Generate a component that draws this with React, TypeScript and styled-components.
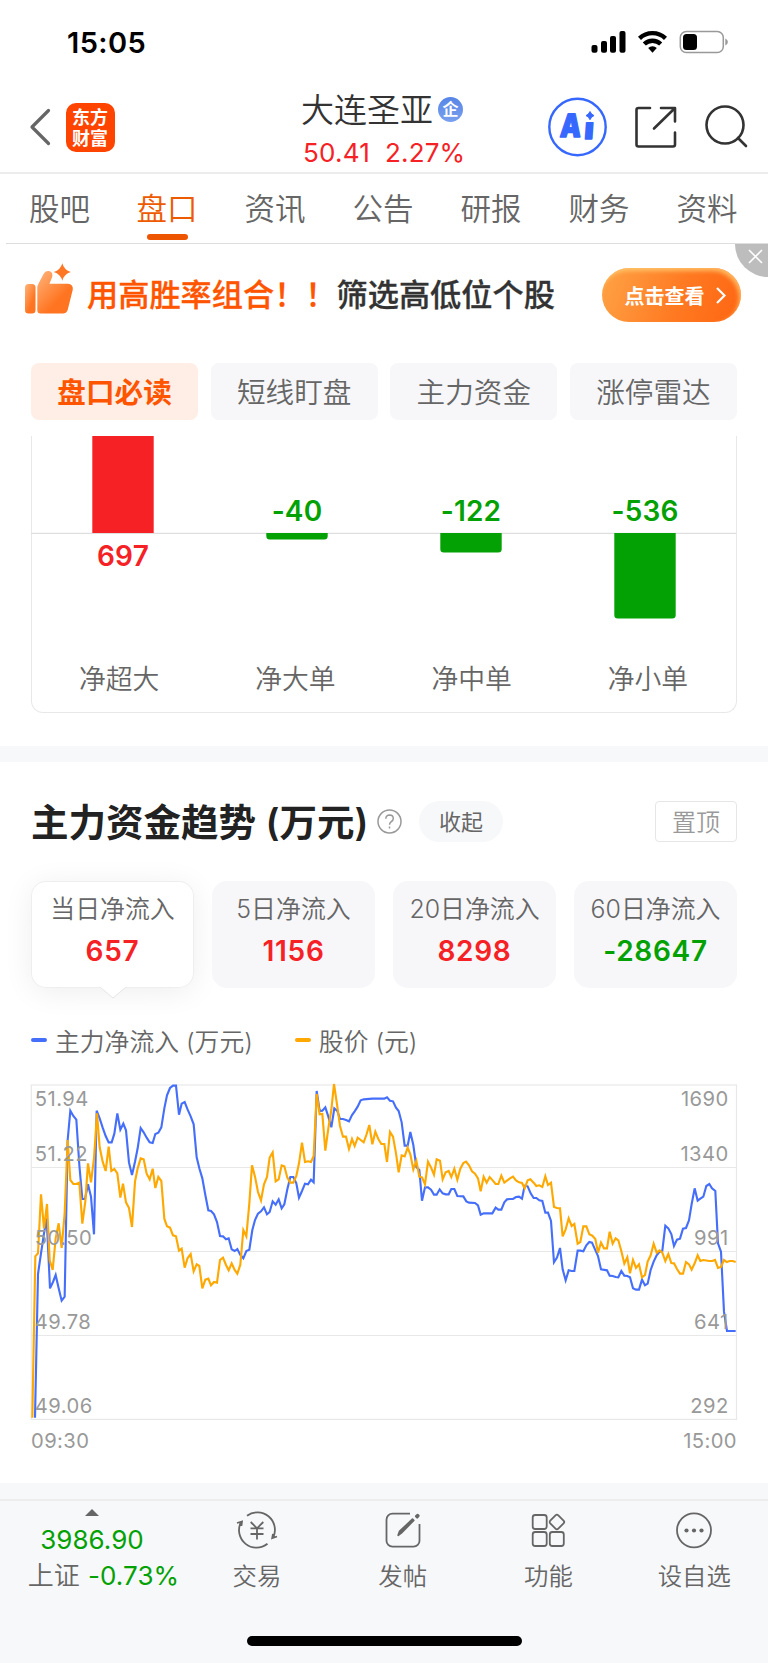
import React from 'react';
import styled, { createGlobalStyle } from 'styled-components';

const RED = '#f62124';
const GREEN = '#03a104';
const ORANGE = '#ff5500';
const GREY = '#666666';

const Global = createGlobalStyle`
  * { box-sizing: border-box; }
  body { margin: 0; background: #fff; }
`;

const Screen = styled.div`
  width: 768px;
  height: 1663px;
  display: flex;
  flex-direction: column;
  overflow: hidden;
  background: #fff;
  color: ${GREY};
  font-family: Inter, 'Noto Sans CJK SC', sans-serif;
  font-weight: 400;
  white-space: nowrap;
  svg { display: block; flex: none; }
`;

const StatusBar = styled.div`
  height: 84px;
  padding: 0 39px 0 67px;
  display: flex;
  justify-content: space-between;
  align-items: center;
`;

const Clock = styled.span`
  font-size: 29px;
  font-weight: 600;
  letter-spacing: 0.4px;
  color: #000;
`;

const Header = styled.header`
  height: 90px;
  border-bottom: 2px solid #ececec;
  display: grid;
  grid-template-columns: 270px 1fr 270px;
`;

const HeaderLeft = styled.div`
  display: flex;
  align-items: center;
  gap: 15px;
  padding: 0 0 6px 29px;
`;

const BrandLogo = styled.div`
  width: 49px;
  height: 49px;
  padding: 3px 6px 0;
  border-radius: 10px;
  background: #ff4400;
  color: #fff;
  font: 700 18px/21px 'Noto Sans CJK SC', sans-serif;
  white-space: normal;
  word-break: break-all;
`;

const HeaderTitle = styled.div`
  padding: 6px 0 0 31px;
  display: flex;
  flex-direction: column;
`;

const StockName = styled.div`
  display: flex;
  align-items: center;
  gap: 5px;
  height: 40px;
  color: #333;
  font-size: 33px;
  line-height: 38px;
  padding-bottom: 1px;
  font-weight: 350;
`;

const NameBadge = styled.span`
  width: 25px;
  height: 25px;
  border-radius: 50%;
  background: linear-gradient(#5685e6, #7ba0ee);
  color: #fff;
  font-size: 16px;
  font-weight: 700;
  line-height: 24px;
  text-align: center;
`;

const Quote = styled.div`
  display: flex;
  gap: 15px;
  padding-left: 2px;
  height: 46px;
  line-height: 46px;
  font-size: 26px;
  letter-spacing: 0.2px;
  color: ${RED};
`;

const HeaderTools = styled.div`
  display: flex;
  align-items: center;
  justify-content: flex-end;
  padding: 0 20px 6px 0;
`;

const Tabs = styled.nav`
  height: 70px;
  margin-left: 6px;
  border-bottom: 1px solid #dedede;
  display: grid;
  grid-template-columns: 107px repeat(6, 108px);
`;

const Tab = styled.div<{ $active?: boolean }>`
  display: flex;
  flex-direction: column;
  align-items: center;
  justify-content: space-between;
  font-size: 30.5px;
  font-weight: 350;
  line-height: 70px;
  height: 66px;
  color: ${p => (p.$active ? '#ee5a00' : GREY)};
  span { height: 58px; }
  &::after {
    content: '';
    width: 41px;
    height: 6px;
    border-radius: 3px;
    background: ${p => (p.$active ? '#ee5500' : 'transparent')};
  }
`;

const Promo = styled.section`
  position: relative;
  height: 119px;
  display: flex;
  align-items: flex-start;
  padding: 19px 27px 0 24px;
`;

const PromoText = styled.div`
  width: 528px;
  padding-left: 13px;
  font: 500 31.2px/60px 'Noto Sans CJK SC', sans-serif;
  -webkit-text-stroke: 0.3px;
  color: #333;
  em { font-style: normal; color: ${ORANGE}; }
`;

const PromoButton = styled.div`
  width: 139px;
  height: 54px;
  margin-top: 5px;
  padding-left: 7px;
  border-radius: 27px;
  background: linear-gradient(110deg, #ff9c40 10%, #ff7a22 55%, #ff6512);
  box-shadow: inset -2px 3px 4px rgba(255, 210, 120, 0.75);
  color: #fff;
  font-size: 20px;
  font-weight: 700;
  display: flex;
  align-items: center;
  justify-content: center;
  gap: 11px;
`;

const CloseCorner = styled.div`
  position: absolute;
  right: 0;
  top: 0;
  width: 33px;
  height: 33px;
  border-bottom-left-radius: 33px;
  background: #bdbdbd;
  padding: 5px 0 0 13px;
`;

const Pills = styled.div`
  display: grid;
  grid-template-columns: repeat(4, 1fr);
  gap: 12.5px;
  padding: 0 31px;
  height: 73px;
`;

const Pill = styled.div<{ $active?: boolean }>`
  height: 57px;
  border-radius: 8px;
  background: ${p => (p.$active ? '#ffeee6' : '#f7f7fa')};
  color: ${p => (p.$active ? ORANGE : GREY)};
  font-size: 28.6px;
  font-weight: ${p => (p.$active ? 700 : 350)};
  line-height: 60px;
  text-align: center;
`;

const BarPanel = styled.section`
  margin: 0 31px;
  height: 277px;
  border: 1.5px solid #e8e8e8;
  border-top: 0;
  border-radius: 0 0 12px 12px;
`;

const BarLabels = styled.div`
  display: grid;
  grid-template-columns: repeat(4, 1fr);
  text-align: center;
  font-size: 26.8px;
  font-weight: 350;
  line-height: 40px;
  margin: 1px 0 0 -1px;
`;

const Band = styled.div<{ $top?: number }>`
  height: 16px;
  margin-top: ${p => p.$top ?? 0}px;
  background: #f7f8fa;
  flex: none;
`;

const SectionHead = styled.div`
  display: flex;
  align-items: center;
  height: 41px;
  margin: 39px 31px 0;
`;

const SectionTitle = styled.h2`
  margin: 0;
  width: 346px;
  height: 41px;
  font-size: 37.5px;
  font-weight: 600;
  line-height: 43px;
  color: #222;
`;

const FoldButton = styled.div`
  width: 84px;
  height: 41px;
  margin-left: 17px;
  border-radius: 21px;
  background: #f7f8fa;
  font-size: 22px;
  line-height: 42px;
  text-align: center;
`;

const PinButton = styled.div`
  width: 82px;
  height: 41px;
  margin-left: auto;
  border: 1.5px solid #e6e6e6;
  border-radius: 4px;
  font-size: 24px;
  font-weight: 350;
  line-height: 42px;
  text-align: center;
  color: #999;
`;

const Cards = styled.div`
  display: grid;
  grid-template-columns: repeat(4, 163px);
  justify-content: space-between;
  margin: 39px 31px 0;
`;

const Card = styled.div<{ $active?: boolean }>`
  position: relative;
  height: 107px;
  padding-top: 9px;
  border-radius: 15px;
  background: ${p => (p.$active ? '#fff' : '#f7f7fa')};
  box-shadow: ${p => (p.$active ? 'inset 0 0 0 1px #eeeeee, 0 4px 30px rgba(0,0,0,0.07)' : 'none')};
  text-align: center;
  font-size: 24.9px;
  font-weight: 350;
  line-height: 38px;
`;

const CardTail = styled.svg`
  position: absolute;
  left: 69px;
  top: 105px;
`;

const CardValue = styled.div<{ $down?: boolean }>`
  font-size: 28px;
  font-weight: 600;
  line-height: 47px;
  letter-spacing: 0.7px;
  color: ${p => (p.$down ? GREEN : RED)};
`;

const Legend = styled.div`
  display: flex;
  gap: 42px;
  height: 40px;
  margin: 32px 31px 0;
`;

const LegendItem = styled.div<{ $color: string }>`
  display: flex;
  align-items: center;
  gap: 8px;
  font-size: 24.8px;
  font-weight: 350;
  &::before {
    content: '';
    width: 16px;
    height: 4px;
    border-radius: 2px;
    background: ${p => p.$color};
  }
`;

const TrendChart = styled.svg`
  margin: 22px 0 0 28px;
`;

const TimeAxis = styled.div`
  display: flex;
  justify-content: space-between;
  height: 40px;
  margin: -1px 31px 0;
  font-size: 20.2px;
  letter-spacing: 0.4px;
  line-height: 40px;
  color: #999;
`;

const BottomBar = styled.footer`
  flex: 1;
  border-top: 2px solid #ededed;
  background: #f7f8fa;
  display: flex;
  flex-direction: column;
  align-items: center;
`;

const NavRow = styled.div`
  display: grid;
  grid-template-columns: 184px repeat(4, 145.8px);
  width: 768px;
  height: 135px;
`;

const IndexCell = styled.div`
  display: flex;
  flex-direction: column;
  align-items: center;
  padding-top: 8px;
  font-size: 26px;
  color: ${GREEN};
`;

const IndexValue = styled.div`
  height: 36px;
  line-height: 36px;
  margin-top: 6px;
`;

const IndexChange = styled.div`
  height: 36px;
  line-height: 36px;
  padding-left: 23px;
  letter-spacing: 0.1px;
  span { color: ${GREY}; font-weight: 350; margin-right: 8px; }
`;

const NavItem = styled.div`
  display: flex;
  flex-direction: column;
  align-items: center;
  padding-top: 9px;
  font-size: 24.4px;
  font-weight: 350;
  line-height: 36px;
  gap: 8px;
`;

const HomeIndicator = styled.div`
  width: 275px;
  height: 10px;
  border-radius: 5px;
  background: #000;
`;

/* Series are held in thirds of a pixel, measured from the left edge of the page. */
const flowLine =
  '105,1043 114,612 123,550 132,490 140,445 150,655 159,636 167,615 176,655 185,692 194,680 203,210 211,122 220,138 229,149 238,285 247,387 255,387 264,343 273,380 282,493 290,122 299,145 308,173 317,198 326,217 335,217 343,191 352,130 361,179 370,161 378,181 387,278 396,315 405,275 413,235 422,174 431,187 440,203 449,217 458,219 466,192 475,188 484,172 493,115 501,76 510,54 519,47 528,47 537,134 545,101 554,96 563,119 572,139 581,163 590,262 598,295 607,325 616,375 625,421 633,423 642,433 651,456 660,498 669,499 678,508 686,505 695,538 704,543 712,537 721,555 730,565 739,543 748,539 757,480 765,450 774,431 ' +
  '783,424 792,412 801,433 809,426 818,394 827,404 836,388 845,415 853,403 862,358 871,321 880,321 889,340 897,383 906,363 915,341 924,343 933,329 941,337 950,63 959,123 967,122 976,112 985,140 994,172 1003,115 1012,123 1020,147 1029,147 1038,150 1047,154 1056,135 1064,124 1073,110 1082,91 1091,88 1117,86 1153,86 1161,82 1170,92 1179,94 1188,113 1196,123 1205,157 1214,227 1223,227 1231,186 1240,225 1249,291 1258,300 1266,392 1275,352 1284,352 1293,359 1302,374 1310,374 1319,358 1328,370 1337,373 1346,373 1354,357 1363,357 1372,378 1390,379 1399,394 1407,398 1425,399 1434,406 1442,434 1451,430 1477,430 1487,413 1495,419 1504,419 1513,397 1521,388 1530,387 ' +
  '1539,387 1548,381 1557,380 1566,386 1574,347 1583,349 1592,370 1601,384 1609,384 1618,391 1627,393 1636,428 1644,428 1653,453 1662,577 1671,563 1680,534 1688,598 1697,631 1706,601 1715,603 1723,603 1733,542 1741,542 1750,544 1759,526 1768,516 1776,518 1785,538 1794,558 1803,598 1821,601 1829,617 1838,618 1847,621 1855,622 1864,603 1873,617 1882,618 1890,622 1899,655 1908,659 1917,659 1926,629 1935,646 1943,641 1952,600 1961,575 1970,556 1979,545 1987,542 1996,467 2005,475 2014,492 2022,528 2031,509 2040,506 2049,476 2058,474 2067,451 2075,402 2084,355 2093,392 2101,386 2110,380 2119,348 2128,342 2136,355 2146,363 2154,520 2163,545 2172,725 2181,783 2207,783';

const priceLine =
  '97,1043 106,559 114,550 123,373 132,475 141,402 149,570 158,600 167,505 176,460 185,534 194,430 203,210 211,330 220,342 229,342 238,338 247,461 256,394 264,280 273,337 282,265 291,130 299,232 308,275 317,303 326,230 334,303 343,297 352,310 361,383 369,341 378,397 387,414 396,471 405,335 413,295 422,265 431,268 440,311 449,328 458,296 466,354 475,321 484,333 493,446 501,469 510,473 519,496 528,499 537,542 545,536 554,593 563,564 572,552 581,604 590,583 598,588 607,655 616,629 625,626 633,646 642,636 651,638 660,570 669,563 678,585 686,601 695,580 704,600 712,611 721,584 730,480 739,499 748,400 756,286 765,320 774,366 ' +
  '783,391 792,343 801,321 809,263 818,247 827,334 836,328 845,286 853,289 862,323 871,338 880,338 889,318 897,280 906,218 915,276 924,274 933,276 941,258 950,72 959,133 967,132 976,242 985,175 994,120 1002,42 1012,110 1020,168 1029,200 1038,200 1047,237 1056,207 1064,228 1073,203 1082,210 1091,217 1099,195 1108,165 1117,223 1126,185 1135,207 1144,222 1153,222 1161,276 1170,186 1179,200 1188,250 1196,307 1205,256 1214,259 1223,233 1231,253 1240,298 1249,272 1258,320 1266,322 1275,343 1284,275 1293,292 1302,314 1310,268 1320,272 1328,328 1337,307 1346,303 1354,321 1363,296 1372,329 1381,296 1390,279 1398,275 1407,286 1416,304 1425,311 1434,325 1442,364 1451,320 1460,338 1469,321 1478,331 1487,342 1495,342 1504,317 1513,338 1521,332 1530,325 ' +
  '1539,320 1548,331 1557,337 1566,339 1574,355 1583,331 1591,328 1601,338 1609,348 1618,346 1627,351 1636,319 1644,345 1653,338 1662,411 1671,414 1680,415 1688,499 1697,478 1706,445 1715,468 1723,462 1733,521 1741,516 1750,469 1759,469 1768,493 1777,497 1786,507 1794,548 1803,518 1812,535 1821,535 1829,485 1838,521 1847,505 1855,511 1864,543 1873,581 1882,562 1890,610 1899,570 1908,594 1917,583 1926,622 1935,615 1943,575 1952,556 1961,521 1970,548 1979,541 1987,548 1996,573 2005,552 2014,579 2022,580 2031,597 2040,611 2049,611 2058,576 2067,583 2075,599 2084,580 2093,556 2101,573 2110,570 2128,573 2137,573 2145,570 2154,594 2163,591 2172,570 2180,576 2189,573 2198,573 2207,576';

const tabs = ['股吧', '盘口', '资讯', '公告', '研报', '财务', '资料'];
const pills = ['盘口必读', '短线盯盘', '主力资金', '涨停雷达'];
const bars = [
  { label: '净超大', value: 697, y: 0, h: 97 },
  { label: '净大单', value: -40, y: 97, h: 6.5 },
  { label: '净中单', value: -122, y: 97, h: 19.5 },
  { label: '净小单', value: -536, y: 97, h: 85.5 },
];
const cards = [
  { label: '当日净流入', value: 657 },
  { label: '5日净流入', value: 1156 },
  { label: '20日净流入', value: 8298 },
  { label: '60日净流入', value: -28647 },
];
const levels = [
  { y: 28.7, left: '51.94', right: '1690' },
  { y: 84, left: '51.22', right: '1340' },
  { y: 168, left: '50.50', right: '991' },
  { y: 252, left: '49.78', right: '641' },
  { y: 336, left: '49.06', right: '292' },
];

const StatusIcons = () => (
  <svg width="138" height="24" viewBox="591 30 138 24">
    <rect x="591.5" y="45" width="6" height="7.7" rx="2" />
    <rect x="601" y="41" width="6" height="11.7" rx="2" />
    <rect x="610" y="36" width="6" height="16.7" rx="2" />
    <rect x="619.5" y="31" width="6" height="21.7" rx="2" />
    <g fill="none" stroke="#000" strokeWidth="4.4">
      <path d="M639.5 38.3a19 19 0 0 1 26 0" />
      <path d="M644.3 44a11.8 11.8 0 0 1 16.4 0" />
    </g>
    <path d="M648.2 48a6.2 6.2 0 0 1 8.6 0l-4.3 4.8z" />
    <rect x="680.3" y="31.5" width="43" height="21" rx="6" fill="none" stroke="#999" strokeWidth="1.5" />
    <rect x="683" y="34" width="14" height="16" rx="3.5" />
    <path d="M725.3 38.5q2.6 1.2 2.6 3.5t-2.6 3.5z" fill="#999" />
  </svg>
);

const ToolIcons = () => (
  <svg width="200" height="60" viewBox="548 97 200 60" fill="none">
    <circle cx="577.5" cy="127" r="28.2" stroke="#3668ff" strokeWidth="2.4" />
    <g fill="#3668ff" stroke="#3668ff" strokeWidth="1.4" strokeLinejoin="round" fontWeight="900" fontFamily="Inter, sans-serif">
      <text transform="translate(559.5 137.3) skewX(-4)" fontSize="32" textLength="21" lengthAdjust="spacingAndGlyphs">A</text>
      <text transform="translate(583.8 139) skewX(-4)" fontSize="30" textLength="9.5" lengthAdjust="spacingAndGlyphs">ı</text>
      <path d="M590 111.500q1.200 3 4 4.100-2.800 1.100-4 4.100-1.200-3-4-4.100 2.800-1.100 4-4.100z" strokeWidth="1" />
    </g>
    <g stroke="#333" strokeWidth="2.6" strokeLinecap="round" strokeLinejoin="round">
      <path d="M650 108h-11.5a2 2 0 0 0-2 2v34.5a2 2 0 0 0 2 2h34.5a2 2 0 0 0 2-2V132.5M661 108h14v13.5M674.5 108.5l-20.5 20" />
      <circle cx="725" cy="125" r="18.5" />
      <path d="M738 138l8 8" />
    </g>
  </svg>
);

const ThumbIcon = () => (
  <svg width="50" height="52" viewBox="24 263 50 52">
    <defs>
      <linearGradient id="thumb" x1="0" y1="0" x2="0.6" y2="0.7">
        <stop offset="0" stopColor="#ffb57c" />
        <stop offset="1" stopColor="#ff7420" />
      </linearGradient>
    </defs>
    <rect x="25" y="284" width="10.5" height="29.5" rx="3.5" fill="url(#thumb)" />
    <path d="M37.3 288q0-2.500 1.500-5l4.500-8.500q2-3.700 5.500-3.400 3.700.5 3.600 4.600-.1 1.500-3 8h18.600q5.300.4 4.800 5.800l-5 20q-1 4-5 4H40.500q-3.200 0-3.200-3.500z" fill="url(#thumb)" />
    <path d="M62.3 263.3q1.800 6.800 8.500 8.700-6.700 2-8.500 8.700-1.800-6.700-8.500-8.700 6.700-1.900 8.500-8.700z" fill="#ff7625" />
  </svg>
);

const TradeIcon = () => (
  <svg width="42" height="40" viewBox="-21 -20 42 40" fill="none" stroke={GREY} strokeWidth="1.8">
    <path d="M-10-14.200A17.500 17.500 0 0 1 16.300 7.200M10.500 13.800A17.500 17.500 0 0 1-16.200-7.500M-20-7l5-1.500-.6 4.500M20 6.500l-4.800 1.700.8-4.200" />
    <path d="M-6.300-8L0-1.700 6.300-8M0-1.700V9.500M-6.500-1.700h13M-6.500 4h13" />
  </svg>
);

const PostIcon = () => (
  <svg width="42" height="40" viewBox="-21 -20 42 40" fill="none" stroke={GREY} strokeWidth="1.8">
    <path d="M7-16.300h-17.500a6 6 0 0 0-6 6v21a6 6 0 0 0 6 6h21a6 6 0 0 0 6-6V-6" />
    <path d="M-4.800 5.200l1.300-3.700L9.500-10.800l1.200 1.200L-1.800 3z" fill={GREY} strokeLinejoin="round" />
    <path d="M13-13.800l1.600-1.300 1 1-1.400 1.600z" fill={GREY} strokeWidth="2.2" strokeLinejoin="round" />
  </svg>
);

const GridIcon = () => (
  <svg width="42" height="40" viewBox="-21 -20 42 40" fill="none" stroke={GREY} strokeWidth="1.8">
    <rect x="-15.3" y="-15" width="14" height="14" rx="2.5" />
    <rect x="-15.3" y="2" width="14" height="14" rx="2.5" />
    <rect x="1.8" y="2" width="14" height="14" rx="2.5" />
    <rect x="3.2" y="-13.7" width="11.4" height="11.4" rx="2" transform="rotate(45 8.9 -8)" />
  </svg>
);

const MoreIcon = () => (
  <svg width="42" height="40" viewBox="-21 -20 42 40" fill={GREY}>
    <circle r="17" cy=".3" fill="none" stroke={GREY} strokeWidth="1.8" />
    <circle cx="-7.5" cy=".5" r="2.1" />
    <circle cy=".5" r="2.1" />
    <circle cx="7.5" cy=".5" r="2.1" />
  </svg>
);

const BarPlot = styled.svg`
  margin-left: -1px;
`;

const BarChart = () => (
  <BarPlot width="705" height="222" viewBox="0 0 705 222">
    <line x1="0" x2="705" y1="97.3" y2="97.3" stroke="#dedede" strokeWidth="1.3" />
    {bars.map((b, i) => {
      const cx = 92 + i * 174;
      const up = b.value > 0;
      const color = up ? RED : GREEN;
      const r = up ? 0 : 3.5;
      return (
        <g key={b.label} fill={color}>
          <path d={`M${cx - 30.7} ${b.y}h61.4v${b.h - r}q0 ${r}-${r} ${r}h${2 * r - 61.4}q-${r} 0-${r}-${r}z`} />
          <text x={cx} y={up ? 130 : 85} fontSize="28" fontWeight="600" letterSpacing=".15" textAnchor="middle">
            {b.value}
          </text>
        </g>
      );
    })}
  </BarPlot>
);

const Trend = () => (
  <TrendChart width="712" height="340" viewBox="28 1082 712 340">
    <g fill="none" stroke="#e8e8e8" strokeWidth="1.2">
      <rect x="31.3" y="1085" width="705.2" height="334.4" />
      <path d="M31 1167.500h705M31 1251.500h705M31 1335.500h705" />
    </g>
    <g transform="translate(0 1070) scale(.33333)" fill="none" strokeWidth="6.4" strokeLinejoin="miter">
      <polyline points={flowLine} stroke="#456ffa" />
      <polyline points={priceLine} stroke="#ffa800" />
    </g>
    <g fill="#999" fontSize="20.2" letterSpacing=".45">
      {levels.map(l => (
        <g key={l.left} transform={`translate(0 ${1077 + l.y})`}>
          <text x="34.8">{l.left}</text>
          <text x="728.7" textAnchor="end">{l.right}</text>
        </g>
      ))}
    </g>
  </TrendChart>
);

export default function App() {
  return (
    <Screen>
      <Global />
      <StatusBar>
        <Clock>15:05</Clock>
        <StatusIcons />
      </StatusBar>
      <Header>
        <HeaderLeft>
          <svg width="22" height="38" viewBox="0 0 22 38" fill="none" stroke={GREY} strokeWidth="3.2" strokeLinecap="round" strokeLinejoin="round">
            <path d="M19.5 2.5L3 19l16.5 16.5" />
          </svg>
          <BrandLogo>东方财富</BrandLogo>
        </HeaderLeft>
        <HeaderTitle>
          <StockName>大连圣亚<NameBadge>企</NameBadge></StockName>
          <Quote><span>50.41</span><span>2.27%</span></Quote>
        </HeaderTitle>
        <HeaderTools><ToolIcons /></HeaderTools>
      </Header>
      <Tabs>
        {tabs.map((t, i) => <Tab key={t} $active={i === 1}><span>{t}</span></Tab>)}
      </Tabs>
      <Promo>
        <ThumbIcon />
        <PromoText><em>用高胜率组合！！</em>筛选高低位个股</PromoText>
        <PromoButton>
          点击查看
          <svg width="10" height="17" viewBox="0 0 10 17" fill="none" stroke="#fff" strokeWidth="2.2"><path d="M1 1l7.5 7.5L1 16" /></svg>
        </PromoButton>
        <CloseCorner>
          <svg width="15" height="15" viewBox="0 0 15 15" stroke="#fff" strokeWidth="1.6"><path d="M1 1l13 13M14 1L1 14" /></svg>
        </CloseCorner>
      </Promo>
      <Pills>
        {pills.map((t, i) => <Pill key={t} $active={i === 0}>{t}</Pill>)}
      </Pills>
      <BarPanel>
        <BarChart />
        <BarLabels>{bars.map(b => <span key={b.label}>{b.label}</span>)}</BarLabels>
      </BarPanel>
      <Band $top={33} />
      <SectionHead>
        <SectionTitle>主力资金趋势 (万元)</SectionTitle>
        <svg width="25" height="25" viewBox="0 0 25 25" fill="none" stroke="#999" strokeWidth="1.5">
          <circle cx="12.5" cy="12.5" r="11.5" />
          <path d="M8.800 9.800q.2-3.800 3.800-3.800 3.600.1 3.700 3.500 0 1.800-2 3.200-1.800 1.300-1.800 3M12.500 17.500v2" />
        </svg>
        <FoldButton>收起</FoldButton>
        <PinButton>置顶</PinButton>
      </SectionHead>
      <Cards>
        {cards.map((c, i) => (
          <Card key={c.label} $active={i === 0}>
            {c.label}
            <CardValue $down={c.value < 0}>{c.value}</CardValue>
            {i === 0 && (
              <CardTail width="26" height="13" viewBox="0 0 26 13">
                <path d="M0 1L13 12 26 1" fill="#fff" stroke="#e6e6e6" />
                <path d="M0 0h26l-1.500 2H1.500z" fill="#fff" />
              </CardTail>
            )}
          </Card>
        ))}
      </Cards>
      <Legend>
        <LegendItem $color="#456ffa">主力净流入 (万元)</LegendItem>
        <LegendItem $color="#ffa800">股价 (元)</LegendItem>
      </Legend>
      <Trend />
      <TimeAxis><span>09:30</span><span>15:00</span></TimeAxis>
      <Band $top={22} />
      <BottomBar>
        <NavRow>
          <IndexCell>
            <svg width="14" height="7" viewBox="0 0 14 7" fill={GREY}><path d="M7 0l7 7H0z" /></svg>
            <IndexValue>3986.90</IndexValue>
            <IndexChange><span>上证</span>-0.73%</IndexChange>
          </IndexCell>
          <NavItem><TradeIcon />交易</NavItem>
          <NavItem><PostIcon />发帖</NavItem>
          <NavItem><GridIcon />功能</NavItem>
          <NavItem><MoreIcon />设自选</NavItem>
        </NavRow>
        <HomeIndicator />
      </BottomBar>
    </Screen>
  );
}
